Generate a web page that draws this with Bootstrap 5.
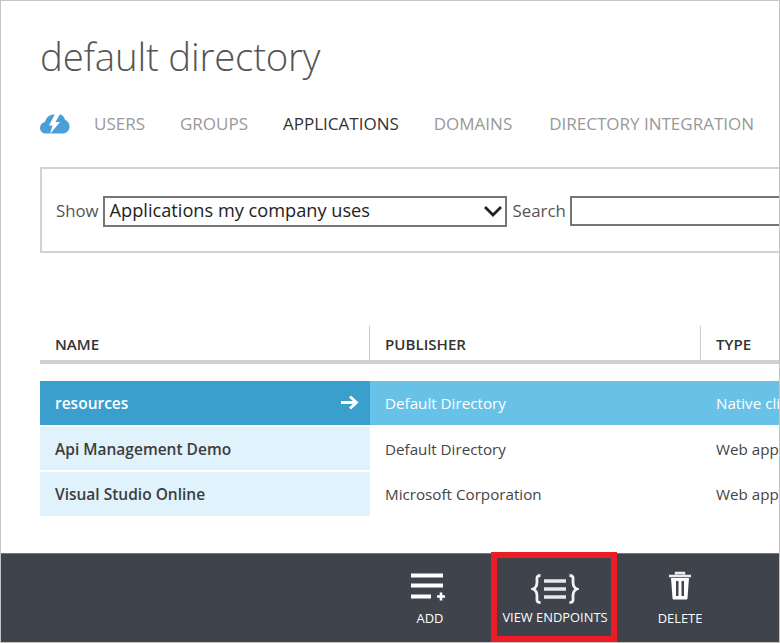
<!DOCTYPE html>
<html lang="en">
<head>
  <meta charset="UTF-8" />
  <meta name="viewport" content="width=device-width, initial-scale=1.0" />
  <title>default directory</title>
  <link href="https://cdn.jsdelivr.net/npm/bootstrap@5.3.3/dist/css/bootstrap.min.css" rel="stylesheet" />
  <script src="https://cdn.jsdelivr.net/npm/bootstrap@5.3.3/dist/js/bootstrap.bundle.min.js"></script>
  <style>
    html, body { height: 100%; overflow: hidden; }
    body {
      font-family: "Open Sans", "Noto Sans", sans-serif;
      color: #444;
      background: #fff;
    }
    .frame {
      height: 643px;
      width: 780px;
      border: 1px solid #c4c4c4;
      overflow: hidden;
    }
    .page-area { padding-left: 39px; width: 1100px; flex: 1 1 auto; min-height: 0; overflow: hidden; }
    .dir-title {
      font-size: 38.4px;
      font-weight: 300;
      color: #555;
      line-height: 50px;
      margin: 30px 0 0;
      letter-spacing: -.2px;
    }
    .dir-tabs { margin-top: 24px; height: 38px; gap: 35px; }
    .dir-tabs a { font-size: 17px; color: #999; text-decoration: none; white-space: nowrap; }
    .dir-tabs a.current { color: #333; }
    .dir-tabs a:last-child { margin-left: 2px; }
    .cloud-icon { width: 30px; height: 20px; margin-right: -11px; }
    .filter-box {
      margin-top: 24px;
      height: 86px;
      border: 2px solid #d2d2d2;
      padding: 2px 0 0 14px;
      font-size: 16.8px;
      color: #555;
    }
    .fake-select {
      width: 404px;
      height: 31px;
      border: 2px solid #767676;
      color: #222;
      font-size: 18.2px;
      padding-left: 5px;
      margin: 0 6px 0 4px;
    }
    .fake-select svg { margin-right: 2px; }
    .fake-search { width: 400px; height: 30px; border: 2px solid #767676; margin-left: 4px; }
    .list-head { margin-top: 73px; height: 38px; border-bottom: 4px solid #d0d0d0; }
    .list-head > div {
      font-size: 15.1px;
      font-weight: 600;
      color: #333;
      padding-left: 15px;
      line-height: 36px;
      border-right: 1px solid #ccc;
      height: 36px;
    }
    .col-name { width: 330px; flex: none; }
    .col-pub { width: 331px; flex: none; }
    .col-type { width: 300px; flex: none; white-space: nowrap; }
    .list-head .col-type { border-right: 0; }
    .list-body { margin-top: 16px; }
    .app-row { height: 45.5px; font-size: 15.2px; border-bottom: 1px solid #fff; padding-top: 1px; }
    .app-row > div { padding-left: 15px; padding-top: 2px; }
    .app-row .col-name { background: #e0f2fb; font-weight: 600; color: #3d3d3d; font-size: 15.5px; }
    .app-row .col-pub, .app-row .col-type { color: #444; }
    .app-row.picked { background: linear-gradient(#fff 1px, #68c2e8 1px); }
    .app-row.picked .col-name { background: #3a9fcd; color: #fff; }
    .app-row.picked .col-pub, .app-row.picked .col-type { color: #fff; }
    .arrow-icon { width: 19px; height: 15px; margin: 0 11px 2px 0; }
    .cmd-bar {
      height: 89px;
      background: #3e434c;
      border-top: 1px solid #777;
      flex: none;
      color: #fff;
    }
    .cmd-item { font-size: 12.9px; line-height: 16px; padding-left: 2px; }
    .cmd-item svg { display: block; }
    .cmd-item span { white-space: nowrap; }
    .cmd-add { width: 124px; margin-left: 366px; padding-top: 17px; }
    .cmd-add span { margin-top: 9px; }
    .cmd-view {
      width: 126px;
      height: 90px;
      margin-top: -2px;
      border: 6px solid #ed1c24;
      padding-top: 14px;
    }
    .cmd-view span { margin-top: 5px; }
    .cmd-del { width: 124px; padding-top: 17px; }
    .cmd-del span { margin-top: 9px; }
  </style>
</head>
<body>
  <div class="frame d-flex flex-column">
    <div class="page-area">
      <h1 class="dir-title">default directory</h1>

      <nav class="dir-tabs d-flex align-items-center">
        <svg class="cloud-icon" viewBox="0 0 30 20">
          <path fill="#4a9fd8" d="M5.5 19.5C2.5 19.5 0 17 0 14s2-5.5 5-6C6 3.500 9.500.5 14 .5h5c3 0 5.500 2 6 5.500 2.500.5 4.500 3 4.500 6.500 0 4-3 7-6.500 7z"/>
          <path fill="#fff" d="M15 0 9 11.500h3.500L10 20l10-12h-4.500L20 0z"/>
        </svg>
        <a href="#">USERS</a>
        <a href="#">GROUPS</a>
        <a href="#" class="current">APPLICATIONS</a>
        <a href="#">DOMAINS</a>
        <a href="#">DIRECTORY INTEGRATION</a>
      </nav>

      <div class="filter-box d-flex align-items-center">
        <span>Show</span>
        <div class="fake-select d-flex align-items-center justify-content-between">
          <span>Applications my company uses</span>
          <svg width="20" height="12" viewBox="0 0 20 12"><path d="M2 2l8 8 8-8" fill="none" stroke="#222" stroke-width="2.8"/></svg>
        </div>
        <span>Search</span>
        <div class="fake-search"></div>
      </div>

      <div class="list-head d-flex">
        <div class="col-name">NAME</div>
        <div class="col-pub">PUBLISHER</div>
        <div class="col-type">TYPE</div>
      </div>

      <div class="list-body">
        <div class="app-row picked d-flex">
          <div class="col-name d-flex align-items-center justify-content-between">
            <span>resources</span>
            <svg class="arrow-icon" viewBox="0 0 19 15"><path d="M1 7.500h15M10 1.500l6.500 6-6.500 6" fill="none" stroke="#fff" stroke-width="2.8"/></svg>
          </div>
          <div class="col-pub d-flex align-items-center">Default Directory</div>
          <div class="col-type d-flex align-items-center">Native client application</div>
        </div>
        <div class="app-row d-flex">
          <div class="col-name d-flex align-items-center">Api Management Demo</div>
          <div class="col-pub d-flex align-items-center">Default Directory</div>
          <div class="col-type d-flex align-items-center">Web application</div>
        </div>
        <div class="app-row d-flex">
          <div class="col-name d-flex align-items-center">Visual Studio Online</div>
          <div class="col-pub d-flex align-items-center">Microsoft Corporation</div>
          <div class="col-type d-flex align-items-center">Web application</div>
        </div>
      </div>
    </div>

    <div class="cmd-bar d-flex">
      <div class="cmd-add cmd-item d-flex flex-column align-items-center">
        <svg width="40" height="30" viewBox="0 0 40 30">
          <path d="M1 4.500h32M1 14.500h32M1 25.500h20" fill="none" stroke="#fff" stroke-width="3.8"/>
          <path d="M27 25.500h8M31 21.500v8" fill="none" stroke="#fff" stroke-width="2.6"/>
        </svg>
        <span>ADD</span>
      </div>
      <div class="cmd-view cmd-item d-flex flex-column align-items-center">
        <svg width="48" height="32" viewBox="0 0 48 32">
          <path d="M9.500 3.500C5 3.500 6 6 6 10c0 4-1 6-4 7 3 1 4 3 4 7 0 4-1 6.500 3.500 6.500M38.500 3.500C43 3.500 42 6 42 10c0 4 1 6 4 7-3 1-4 3-4 7 0 4 1 6.500-3.500 6.500" fill="none" stroke="#f2f2f2" stroke-width="2.8"/>
          <path d="M13 9h22M13 17h22M13 25h22" fill="none" stroke="#e8e8e8" stroke-width="3.4"/>
        </svg>
        <span>VIEW ENDPOINTS</span>
      </div>
      <div class="cmd-del cmd-item d-flex flex-column align-items-center">
        <svg width="26" height="30" viewBox="0 0 26 30">
          <path d="M2 5h22M9 3.500V2h8v1.500" fill="none" stroke="#eee" stroke-width="2.4"/>
          <path fill="#fff" fill-rule="evenodd" d="M4 7h18l-1.500 20c0 1-.5 1.500-1.500 1.500H7c-1 0-1.500-.5-1.500-1.500zM9 10v15h2.500V10zM14.500 10v15H17V10z"/>
        </svg>
        <span>DELETE</span>
      </div>
    </div>
  </div>
</body>
</html>
